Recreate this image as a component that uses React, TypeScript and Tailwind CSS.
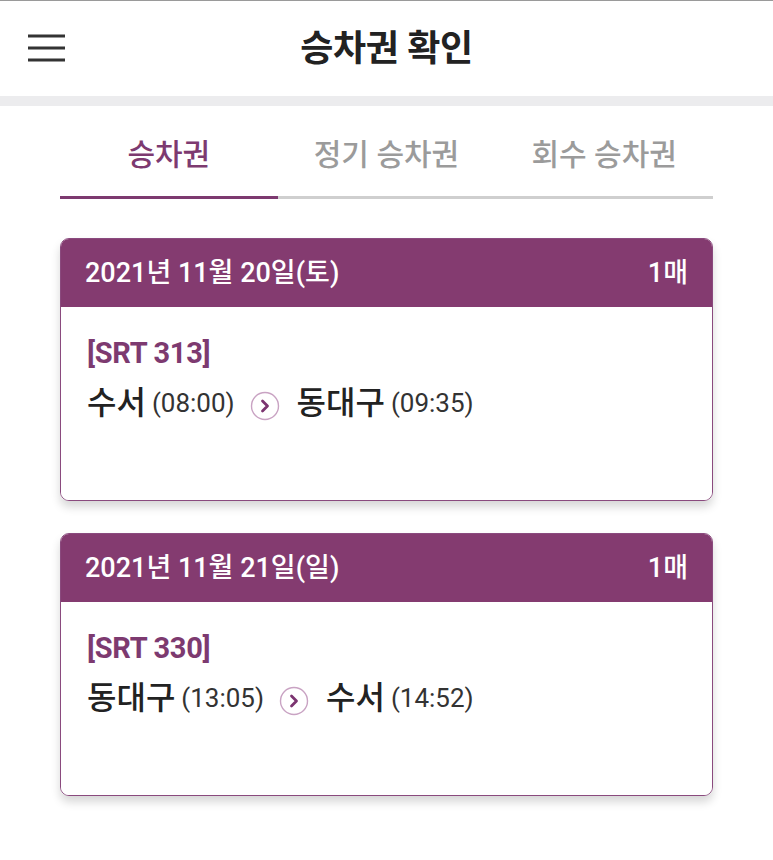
const tickets = [
  { date: "2021년 11월 20일(토)", count: "1매", train: "[SRT 313]", from: "수서", dep: "(08:00)", to: "동대구", arr: "(09:35)" },
  { date: "2021년 11월 21일(일)", count: "1매", train: "[SRT 330]", from: "동대구", dep: "(13:05)", to: "수서", arr: "(14:52)" },
];

const tabs = ["승차권", "정기 승차권", "회수 승차권"];

const ArrowCircle = () => (
  <svg width="30" height="30" viewBox="0 0 30 30" className="ml-[15px] mr-[17px] mt-[6px]">
    <circle cx="15" cy="15" r="13.5" fill="none" stroke="#c9a3c3" strokeWidth="1.4" />
    <path d="M12.5 10 L17.5 15 L12.5 20" fill="none" stroke="#7b3470" strokeWidth="2.8" strokeLinecap="round" strokeLinejoin="round" />
  </svg>
);

export default function App() {
  return (
    <div className="w-[773px] h-[860px] bg-white font-['Roboto','Noto_Sans_CJK_KR',sans-serif] text-[#222]">
      <div className="h-px bg-[#9a9a9a]" />
      <header className="h-[95px] flex items-center relative">
        <svg width="40" height="30" viewBox="0 0 40 30" className="absolute left-[27px] top-[32px]">
          <path d="M1 3 H38 M1 15 H38 M1 27 H38" stroke="#333" strokeWidth="2.8" />
        </svg>
        <h1 className="flex-1 text-center text-[36px] font-bold tracking-[-0.3px] text-[#222]">승차권 확인</h1>
      </header>
      <div className="h-[10px] bg-[#ececee]" />

      <div className="px-[60px]">
        <div className="flex mt-[29px]">
          {tabs.map((t, i) => (
            <div
              key={t}
              className={`flex-1 text-center text-[30px] leading-[40px] font-medium pb-[21px] border-b-[3px] ${
                i === 0 ? "text-[#7d3a70] border-[#7d3a70]" : "text-[#9b9b9b] border-[#cfcfcf]"
              }`}
            >
              {t}
            </div>
          ))}
        </div>

        <div className="flex flex-col gap-[32px] mt-[39px]">
          {tickets.map((tk) => (
            <div key={tk.date} className="rounded-[9px] overflow-hidden border border-[#8a4a7e] shadow-[0_6px_10px_rgba(0,0,0,0.16)]">
              <div className="h-[68px] bg-[#843b70] flex items-center justify-between px-[24px] text-white text-[27px] font-medium">
                <span>{tk.date}</span>
                <span>{tk.count}</span>
              </div>
              <div className="h-[193px] bg-white px-[26px] pt-[29px]">
                <div className="text-[29px] font-bold text-[#7d3a70] tracking-[-0.3px] leading-[34px]">{tk.train}</div>
                <div className="flex items-center mt-[13px] leading-[40px]">
                  <span className="text-[32px] font-medium">{tk.from}</span>
                  <span className="text-[26px] ml-[6px] text-[#333]">{tk.dep}</span>
                  <ArrowCircle />
                  <span className="text-[32px] font-medium">{tk.to}</span>
                  <span className="text-[26px] ml-[6px] text-[#333]">{tk.arr}</span>
                </div>
              </div>
            </div>
          ))}
        </div>
      </div>
    </div>
  );
}
